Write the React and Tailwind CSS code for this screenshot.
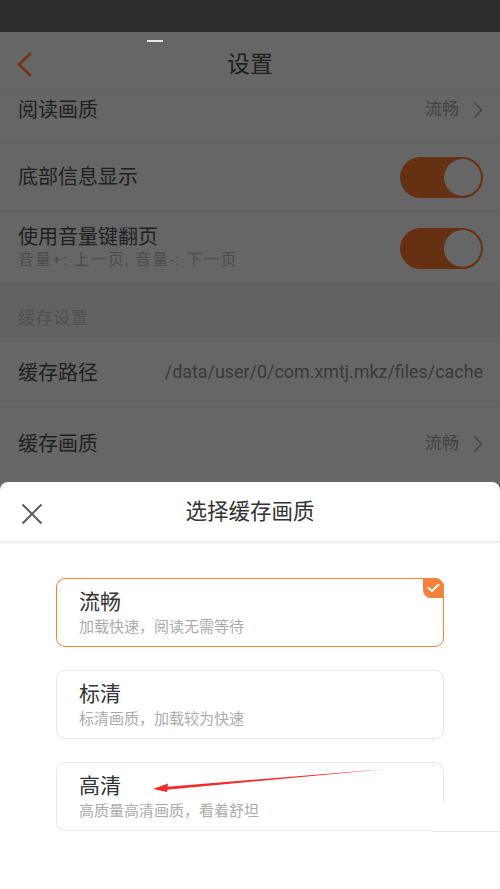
import React from "react";

const FONT = { fontFamily: 'Roboto, "Noto Sans CJK SC", "Noto Sans", sans-serif' };

function Toggle() {
  return (
    <div className="w-[83px] h-[41px] rounded-full bg-[#653112] flex items-center justify-end p-[2px]">
      <div className="w-[37px] h-[37px] rounded-full bg-[#666666]" />
    </div>
  );
}

function Chevron() {
  return (
    <svg width="10" height="18" viewBox="0 0 10 18" className="ml-[14px]">
      <path d="M1.5 1.5 L8.5 9 L1.5 16.5" fill="none" stroke="#474747" strokeWidth="1.4" />
    </svg>
  );
}

function Card({ title, sub, selected }) {
  return (
    <div
      className={
        "relative w-[388px] h-[69px] ml-[56px] rounded-[9px] border pl-[22px] pt-[9px] bg-white " +
        (selected ? "border-[#f5823a]" : "border-[#e6e6e6]")
      }
    >
      <div className="text-[21px] leading-[28px] text-[#333333]">{title}</div>
      <div className="text-[15px] leading-[20px] text-[#ababab] mt-[1px]">{sub}</div>
      {selected && (
        <div className="absolute -top-px -right-px w-[21px] h-[20px] bg-[#f5823a] rounded-tr-[9px] rounded-bl-[8px] flex items-center justify-center">
          <svg width="13" height="10" viewBox="0 0 13 10">
            <path d="M1.5 5 L5 8 L11.5 1.8" fill="none" stroke="white" strokeWidth="2" strokeLinecap="round" strokeLinejoin="round" />
          </svg>
        </div>
      )}
    </div>
  );
}

export default function App() {
  return (
    <div className="relative w-[500px] h-[889px] overflow-hidden bg-[#666666]" style={FONT}>
      {/* status bar */}
      <div className="h-[32px] bg-[#2e2e2e]" />
      {/* nav */}
      <div className="relative h-[62px] flex items-center justify-center border-b border-[#5f5f5f]">
        <div className="absolute left-[147px] top-[8px] w-[16px] h-[2px] bg-[#e8e8e8]" />
        <svg width="18" height="28" viewBox="0 0 18 28" className="absolute left-[16px] top-[19px]">
          <path d="M15 2 L3 13.5 L15 25" fill="none" stroke="#733510" strokeWidth="2.6" />
        </svg>
        <div className="text-[23px] text-[#1e1e1e] leading-[30px] mt-[5px]">设置</div>
      </div>
      {/* 阅读画质 (scrolled) */}
      <div className="h-[49px] flex items-start pt-[2px] pl-[18px] pr-[17px] border-b border-[#616161]">
        <div className="flex-1 text-[20px] leading-[28px] text-[#1f1f1f]">阅读画质</div>
        <div className="flex items-center h-[28px]">
          <span className="text-[17px] text-[#424242]">流畅</span>
          <Chevron />
        </div>
      </div>
      {/* 底部信息显示 */}
      <div className="h-[69px] flex items-center pl-[18px] pr-[17px] border-b border-[#616161]">
        <div className="flex-1 text-[20px] leading-[28px] text-[#1f1f1f]">底部信息显示</div>
        <Toggle />
      </div>
      {/* 使用音量键翻页 */}
      <div className="h-[71px] flex items-start pl-[18px] pr-[17px] pt-[11px]">
        <div className="flex-1">
          <div className="text-[20px] leading-[28px] text-[#1f1f1f]">使用音量键翻页</div>
          <div className="text-[15.5px] leading-[20px] text-[#4c4c4c] -mt-[1px] tracking-[1.65px] whitespace-nowrap">音量+: 上一页, 音量-: 下一页</div>
        </div>
        <div className="mt-[5px]">
          <Toggle />
        </div>
      </div>
      {/* section header */}
      <div className="h-[55px] bg-[#626262] flex items-end pl-[18px] pb-[8px]">
        <div className="text-[17.5px] leading-[24px] text-[#505050]">缓存设置</div>
      </div>
      {/* 缓存路径 */}
      <div className="h-[70px] flex items-center pl-[18px] pr-[17px] border-b border-[#616161]">
        <div className="flex-1 text-[20px] leading-[28px] text-[#1f1f1f]">缓存路径</div>
        <div className="text-[17.9px] text-[#393939] whitespace-nowrap">/data/user/0/com.xmtj.mkz/files/cache</div>
      </div>
      {/* 缓存画质 */}
      <div className="h-[72px] flex items-center pl-[18px] pr-[17px]">
        <div className="flex-1 text-[20px] leading-[28px] text-[#1f1f1f]">缓存画质</div>
        <div className="flex items-center">
          <span className="text-[17px] text-[#424242]">流畅</span>
          <Chevron />
        </div>
      </div>

      {/* bottom sheet */}
      <div className="absolute left-0 right-0 top-[482px] bottom-0 bg-white rounded-t-[8px]">
        <div className="relative h-[61px] flex items-center justify-center border-b-2 border-[#efefef]">
          <svg width="22" height="22" viewBox="0 0 22 22" className="absolute left-[21px] top-[21px]">
            <path d="M1.5 1.5 L20.5 20.5 M20.5 1.5 L1.5 20.5" stroke="#5c5c5c" strokeWidth="2" />
          </svg>
          <div className="text-[21.5px] leading-[28px] text-[#333333]">选择缓存画质</div>
        </div>
        <div className="pt-[35px] flex flex-col gap-[23px]">
          <Card title="流畅" sub="加载快速，阅读无需等待" selected />
          <Card title="标清" sub="标清画质，加载较为快速" />
          <Card title="高清" sub="高质量高清画质，看着舒坦" />
        </div>
        {/* screenshot patch over last card's right side */}
        <div className="absolute left-[432px] top-[320px] w-[68px] h-[30px] bg-white border-b border-[#e6e6e6]" />
        {/* red arrow annotation */}
        <svg width="500" height="60" viewBox="0 0 500 60" className="absolute left-0 top-[277px]">
          <path d="M386 10 L164 28 L164 31 Z" fill="#f42a2a" />
          <path d="M153 30 L168 24.5 L167 33 Z" fill="#f42a2a" />
        </svg>
      </div>
    </div>
  );
}
